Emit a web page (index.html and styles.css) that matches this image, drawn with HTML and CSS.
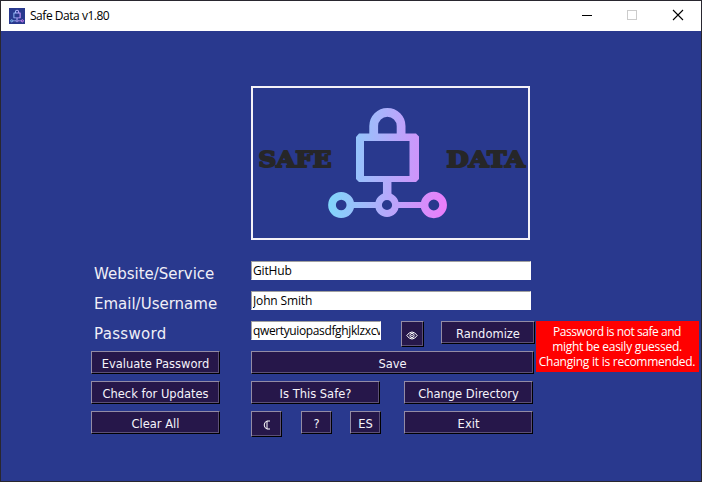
FILE: index.html
```html
<!DOCTYPE html>
<html lang="en">
<head>
<meta charset="utf-8">
<title>Safe Data v1.80</title>
<link rel="stylesheet" href="styles.css">
</head>
<body>
<svg width="0" height="0" class="defs" aria-hidden="true">
  <defs>
    <linearGradient id="glow" gradientUnits="userSpaceOnUse" x1="75" y1="113" x2="193" y2="123">
      <stop offset="0" stop-color="#7fd6fb"/>
      <stop offset=".5" stop-color="#b5a9fb"/>
      <stop offset="1" stop-color="#ea7dfa"/>
    </linearGradient>
    <symbol id="lock" viewBox="73 18 122 114">
      <g fill="none" stroke="url(#glow)">
        <path d="M120.700 48V38a13.700 13.700 0 0 1 27.400 0V48" stroke-width="8.800"/>
        <path d="M134.200 92V108" stroke-width="8.500"/>
        <path d="M98 117H125M143 117H174" stroke-width="6.200"/>
      </g>
      <path fill="url(#glow)" fill-rule="evenodd" d="M106 45.500H163L166 48.500V91L163 94H106L103 91V49ZM111 53V88H156.500V53Z"/>
      <g fill="#29398e" stroke="url(#glow)" stroke-width="7.700">
        <circle cx="88.200" cy="117" r="9.200"/>
        <circle cx="134" cy="117" r="8.500" stroke-width="6.800"/>
        <circle cx="180.800" cy="117" r="9.300"/>
      </g>
    </symbol>
  </defs>
</svg>
<div class="window">
  <header class="titlebar">
    <span class="app-icon"><svg width="14" height="14"><use href="#lock"/></svg></span>
    <span class="title">Safe Data v1.80</span>
    <svg class="controls" width="138" height="30" viewBox="0 0 138 30" fill="none" shape-rendering="crispEdges">
      <path d="M19 14.500H29" stroke="#000"/>
      <rect x="64.500" y="9.500" width="9" height="9" stroke="#ccc"/>
      <path d="M110 9L120 19M120 9L110 19" stroke="#000" stroke-width="1.100" shape-rendering="auto"/>
    </svg>
  </header>
  <main class="content">
    <div class="logo">
      <svg width="275" height="150" viewBox="0 0 275 150">
        <use href="#lock" x="73" y="18" width="122" height="114"/>
        <text class="brand" x="5.500" y="79" textLength="73" lengthAdjust="spacingAndGlyphs">SAFE</text>
        <text class="brand" x="193.500" y="79" textLength="78.500" lengthAdjust="spacingAndGlyphs">DATA</text>
      </svg>
    </div>
    <div class="form">
      <div class="row">
        <label class="name" for="service">Website/Service</label>
        <input id="service" class="field" value="GitHub">
      </div>
      <div class="row">
        <label class="name" for="email">Email/Username</label>
        <input id="email" class="field" value="John Smith">
      </div>
      <div class="row">
        <label class="name pass" for="password">Password</label>
        <input id="password" class="field short" value="qwertyuiopasdfghjklzxcvbnm">
        <button class="btn eye" aria-label="Show"><svg width="12" height="9" viewBox="0 0 12 9" fill="none" stroke="#fff"><path d="M.8 4.500Q3.200 1 6 1t5.200 3.500Q8.800 8 6 8T.8 4.500Z"/><circle cx="6" cy="4.500" r="2.100"/><circle cx="6" cy="4.500" r=".4"/></svg></button>
        <button class="btn random">Randomize</button>
        <p class="warning"><span class="tight">Password is not safe and</span><br>might be easily guessed.<br><span class="snug">Changing it is recommended.</span></p>
      </div>
      <div class="row">
        <button class="btn side">Evaluate Password</button>
        <button class="btn save">Save</button>
      </div>
      <div class="row">
        <button class="btn side">Check for Updates</button>
        <button class="btn">Is This Safe?</button>
        <button class="btn last">Change Directory</button>
      </div>
      <div class="row">
        <button class="btn side">Clear All</button>
        <div class="minis">
          <button class="btn mini tall" aria-label="Dark mode"><svg width="8" height="10" viewBox="0 0 8 10" fill="none" stroke="#fff"><path d="M7 1H4Q1.200 2 1.200 5T4 9H7M4 1V9"/></svg></button>
          <button class="btn mini">?</button>
          <button class="btn mini es">ES</button>
        </div>
        <button class="btn exit">Exit</button>
      </div>
    </div>
  </main>
</div>
</body>
</html>
```
FILE: styles.css
```css
* { box-sizing: border-box; }
body { margin: 0; }
.defs { display: block; }

.window {
  width: 702px;
  height: 482px;
  border: 1px solid #29272f;
  background: #29398e;
  overflow: hidden;
}

.titlebar {
  display: flex;
  align-items: center;
  height: 30px;
  padding-left: 8px;
  background: #fff;
}
.app-icon {
  display: grid;
  place-items: center;
  width: 16px;
  height: 16px;
  background: #29398e;
}
.title {
  margin-left: 5px;
  font: 12px/16px "Open Sans", "Noto Sans", sans-serif;
  letter-spacing: -.47px;
  color: #000;
}
.controls { margin-left: auto; }

.content { padding: 55px 0 0 90px; }
.logo {
  width: 279px;
  height: 154px;
  margin-left: 160px;
  border: 2px solid #f4f2f8;
}
.logo svg { display: block; }
.brand {
  font: bold 22.5px "DejaVu Serif", serif;
  fill: #262628;
  stroke: #262628;
  stroke-width: 1.9px;
  stroke-linejoin: round;
}

.form { margin-top: 21px; }
.row {
  display: flex;
  align-items: flex-start;
  height: 30px;
}
.name {
  width: 160px;
  padding: 3px 0 0 3px;
  font: 15px/20px "DejaVu Sans", sans-serif;
  color: #f0eff7;
}
.pass { letter-spacing: .3px; }
.field {
  width: 280px;
  height: 19px;
  padding: 0 0 1px 1px;
  border: 1px solid #fff;
  border-top-color: #a0a0a0;
  border-left-color: #a0a0a0;
  border-radius: 0;
  background: #fff;
  color: #000;
  font: 12px/16px "Open Sans", "Noto Sans", sans-serif;
  letter-spacing: -.15px;
  outline: none;
}
.field.short { width: 130px; letter-spacing: -.37px; }

.btn {
  display: flex;
  flex: none;
  align-items: center;
  justify-content: center;
  width: 129px;
  height: 23px;
  padding: 2px 0 0;
  border: 1px solid #000;
  border-top-color: #938ba5;
  border-left-color: #938ba5;
  border-radius: 0;
  background: #26174a;
  box-shadow: inset -1px -1px #5c5077;
  color: #f5f3fa;
  font: 11.5px/16px "DejaVu Sans", sans-serif;
  white-space: nowrap;
}
.side { margin-right: 31px; }
.save { width: 283px; }
.last { margin-left: 24px; }
.eye { width: 23px; height: 26px; margin-left: 20px; padding: 3px 1px 0 0; }
.random { width: 94px; margin-left: 17px; }
.minis { display: flex; width: 130px; }
.mini { width: 31px; margin-right: 19px; }
.mini.es { margin: 0 0 0 -1px; }
.mini.tall { height: 26px; padding-top: 1px; }
.exit { margin-left: 23px; }

.warning {
  flex: none;
  width: 163px;
  height: 51px;
  margin: 0 0 0 1px;
  padding: 3px 1px 0 0;
  background: #f00;
  color: #fff;
  font: 12px/15px "Open Sans", "Noto Sans", sans-serif;
  letter-spacing: -.27px;
  text-align: center;
  white-space: nowrap;
}
.tight { letter-spacing: -.45px; }
.snug { letter-spacing: -.25px; }
```
